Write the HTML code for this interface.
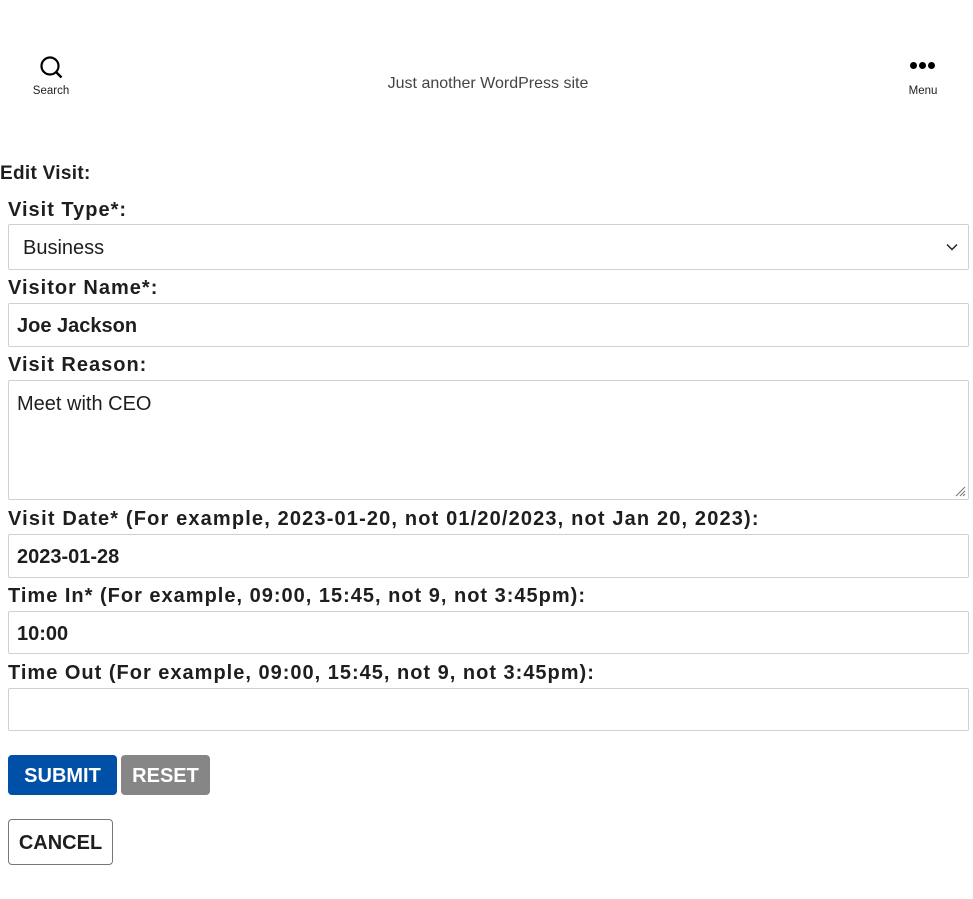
<!DOCTYPE html>
<html><head><meta charset="utf-8"><style>
body{margin:0;width:973px;height:899px;background:#fff;font-family:"Liberation Sans",sans-serif;color:#1e1e1e;position:relative;overflow:hidden}
.a{position:absolute}
.lbl{position:absolute;left:8px;font-weight:bold;font-size:20px;letter-spacing:1px;white-space:nowrap;line-height:24px}
.box{position:absolute;left:8px;width:961px;border:1px solid #d0d0d0;border-radius:2px;background:#fff;box-sizing:border-box;font-size:20px;padding-left:8px}
.btn{position:absolute;border-radius:4px;font-weight:bold;font-size:20px;color:#fff;text-align:center;box-sizing:border-box}
</style></head><body>
<svg class="a" style="left:39px;top:55px" width="25" height="25" viewBox="0 0 25 25"><circle cx="11" cy="11" r="8.5" fill="none" stroke="#000" stroke-width="2.2"/><line x1="17" y1="17" x2="22.5" y2="22.5" stroke="#000" stroke-width="2.4"/></svg>
<div class="a" style="left:28px;top:85px;font-size:11.5px;width:46px;text-align:center">Search</div>
<div class="a" style="left:330px;top:75px;width:316px;text-align:center;font-size:16px;color:#444">Just another WordPress site</div>
<div class="a" style="left:910px;top:62px;width:26px;height:7px">
<span class="a" style="left:0;top:0;width:7px;height:7px;border-radius:50%;background:#000"></span>
<span class="a" style="left:9px;top:0;width:7px;height:7px;border-radius:50%;background:#000"></span>
<span class="a" style="left:18px;top:0;width:7px;height:7px;border-radius:50%;background:#000"></span></div>
<div class="a" style="left:903px;top:85px;font-size:11.5px;width:40px;text-align:center">Menu</div>

<div class="lbl" style="left:0;top:162px;font-size:19px;letter-spacing:0.3px">Edit Visit:</div>
<div class="lbl" style="top:198px">Visit Type*:</div>
<div class="box" style="top:224px;height:46px;line-height:46px;padding-left:14px">Business
<svg class="a" style="right:10px;top:18px" width="12" height="8" viewBox="0 0 12 8"><path d="M1 1.5l5 5 5-5" fill="none" stroke="#222" stroke-width="1.5"/></svg></div>
<div class="lbl" style="top:276px">Visitor Name*:</div>
<div class="box" style="top:303px;height:44px;line-height:45px;font-weight:bold">Joe Jackson</div>
<div class="lbl" style="top:353px">Visit Reason:</div>
<div class="box" style="top:380px;height:120px;padding-top:12px">Meet with CEO
<svg class="a" style="right:2px;bottom:2px" width="12" height="12"><path d="M11 2L2 11M11 6L6 11M11 9L9 11" stroke="#777" stroke-width="1"/></svg></div>
<div class="lbl" style="top:507px;letter-spacing:1.15px">Visit Date* (For example, 2023-01-20, not 01/20/2023, not Jan 20, 2023):</div>
<div class="box" style="top:534px;height:44px;line-height:45px;font-weight:bold">2023-01-28</div>
<div class="lbl" style="top:584px">Time In* (For example, 09:00, 15:45, not 9, not 3:45pm):</div>
<div class="box" style="top:611px;height:43px;line-height:44px;font-weight:bold">10:00</div>
<div class="lbl" style="top:661px">Time Out (For example, 09:00, 15:45, not 9, not 3:45pm):</div>
<div class="box" style="top:688px;height:43px"></div>
<div class="btn" style="left:8px;top:755px;width:109px;height:40px;line-height:42px;background:#0050a8">SUBMIT</div>
<div class="btn" style="left:121px;top:755px;width:89px;height:40px;line-height:42px;background:#868686">RESET</div>
<div class="btn" style="left:8px;top:819px;width:105px;height:46px;line-height:46px;background:#fff;color:#1e1e1e;border:1px solid #777">CANCEL</div>
</body></html>
